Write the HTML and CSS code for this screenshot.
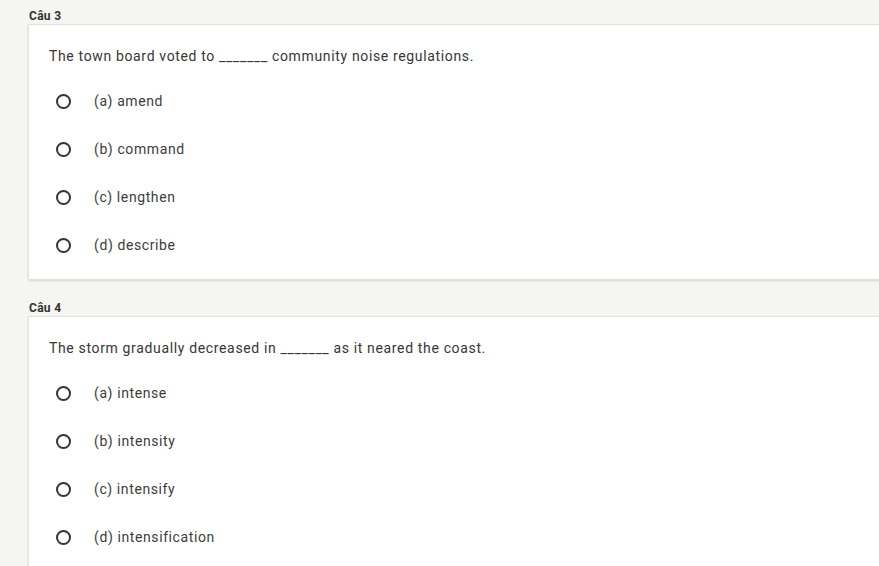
FILE: index.html
```html
<!DOCTYPE html>
<html lang="vi">
<head>
<meta charset="utf-8">
<title>Quiz</title>
<link rel="stylesheet" href="styles.css">
</head>
<body>
<main class="page">
  <section class="question">
    <div class="q-label">Câu 3</div>
    <div class="card">
      <p class="q-text">The town board voted to _______ community noise regulations.</p>
      <ul class="options">
        <li class="option"><span class="radio"></span><span class="opt-text">(a) amend</span></li>
        <li class="option"><span class="radio"></span><span class="opt-text">(b) command</span></li>
        <li class="option"><span class="radio"></span><span class="opt-text">(c) lengthen</span></li>
        <li class="option"><span class="radio"></span><span class="opt-text">(d) describe</span></li>
      </ul>
    </div>
  </section>
  <section class="question">
    <div class="q-label">Câu 4</div>
    <div class="card">
      <p class="q-text">The storm gradually decreased in _______ as it neared the coast.</p>
      <ul class="options">
        <li class="option"><span class="radio"></span><span class="opt-text">(a) intense</span></li>
        <li class="option"><span class="radio"></span><span class="opt-text">(b) intensity</span></li>
        <li class="option"><span class="radio"></span><span class="opt-text">(c) intensify</span></li>
        <li class="option"><span class="radio"></span><span class="opt-text">(d) intensification</span></li>
      </ul>
    </div>
  </section>
</main>
</body>
</html>
```
FILE: styles.css
```css
html, body {
  margin: 0;
  padding: 0;
  background: #f5f5f1;
  overflow: hidden;
}
body {
  font-family: Roboto, "Noto Sans", Arial, sans-serif;
  color: #333;
}
.page {
  width: 920px;
  padding: 9px 0 0 28px;
  display: flex;
  flex-direction: column;
  gap: 21px;
}
.q-label {
  font-size: 12px;
  font-weight: 700;
  line-height: 14px;
  letter-spacing: 0.3px;
  color: #333;
  margin-bottom: 1px;
  padding-left: 1px;
}
.card {
  background: #fff;
  border: 1px solid #e2e2de;
  box-shadow: 0 1px 2px rgba(0, 0, 0, 0.12);
  padding: 21px 20px 10px 20px;
}
.q-text {
  margin: 0;
  font-size: 14px;
  line-height: 20px;
  letter-spacing: 0.65px;
  color: #363636;
}
.options {
  list-style: none;
  margin: 11px 0 0 0;
  padding: 0 0 0 7px;
}
.option {
  height: 48px;
  display: flex;
  align-items: center;
  gap: 23px;
}
.radio {
  width: 15px;
  height: 15px;
  box-sizing: border-box;
  border: 2px solid #333;
  border-radius: 50%;
  flex: none;
}
.opt-text {
  font-size: 14px;
  line-height: 20px;
  letter-spacing: 0.6px;
  color: #3c3c3c;
}
```
